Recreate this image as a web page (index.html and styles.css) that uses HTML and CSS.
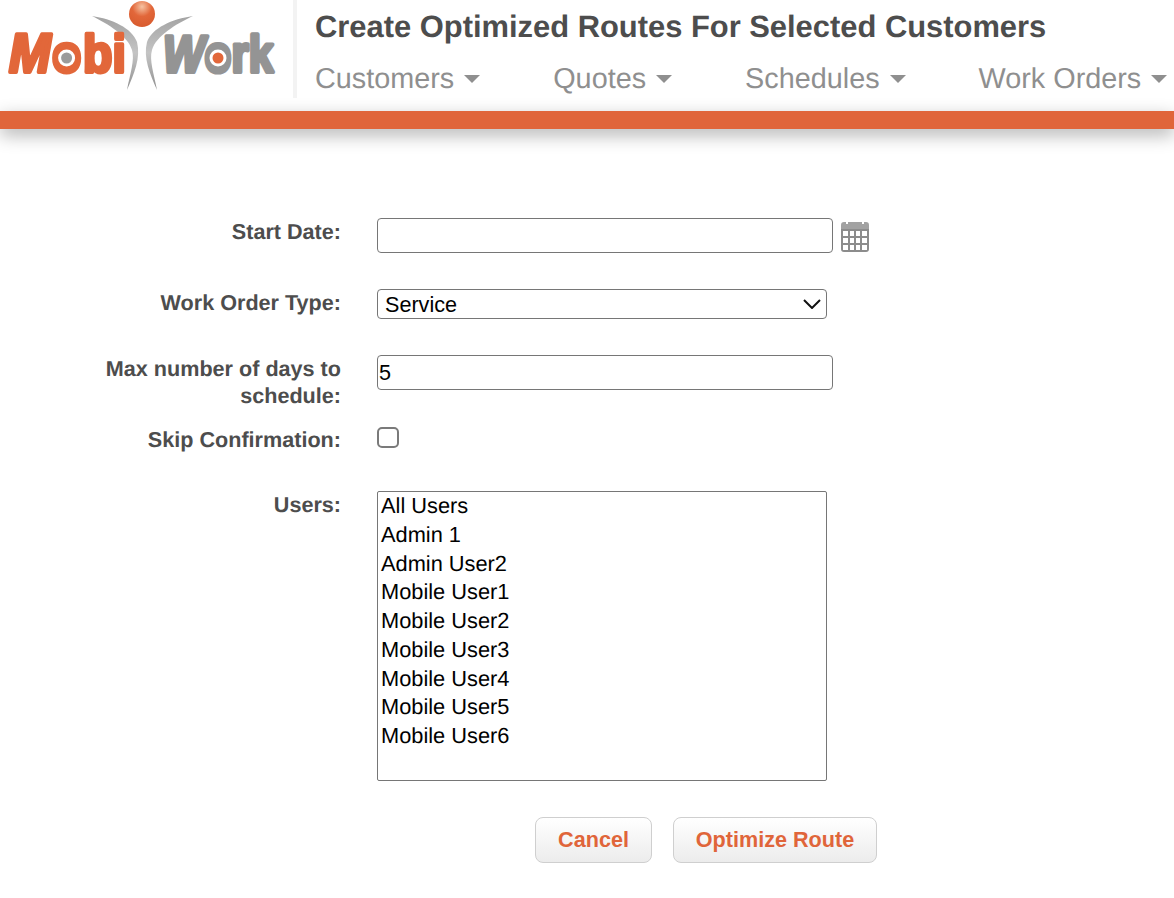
FILE: index.html
```html
<!DOCTYPE html>
<html lang="en">
<head>
  <meta charset="UTF-8" />
  <title>Create Optimized Routes</title>
  <meta name="viewport" content="width=device-width, initial-scale=1.0"/>
  <link rel="stylesheet" href="styles.css">
</head>
<body>

  <div class="header">
    <div class="logo-container">
      <svg class="logo" width="293" height="98" viewBox="0 0 293 98">
        <defs>
          <radialGradient id="ball" cx="50%" cy="22%" r="75%">
            <stop offset="0" stop-color="#f6c3a2"/>
            <stop offset="0.5" stop-color="#e2673a"/>
            <stop offset="1" stop-color="#d95c2f"/>
          </radialGradient>
          <linearGradient id="arm" x1="0" y1="0" x2="0" y2="1">
            <stop offset="0" stop-color="#a3a3a3"/>
            <stop offset="0.5" stop-color="#c4c4c4"/>
            <stop offset="1" stop-color="#8f8f8f"/>
          </linearGradient>
        </defs>
        <path d="M92 16 C112 19 132 28 137 42 C141 58 134 74 127 90 C130 74 135 60 132 50 C128 36 108 24 92 16 Z" fill="url(#arm)"/>
        <path d="M193 16 C172 19 152 28 147 42 C143 58 150 74 157 90 C154 74 149 60 152 50 C156 36 176 24 193 16 Z" fill="url(#arm)"/>
        <circle cx="142" cy="14" r="13" fill="url(#ball)"/>
        <text class="logo-text logo-mobi" transform="scale(1 1.1)" y="65"><tspan class="logo-cap" x="9">M</tspan><tspan x="52">o</tspan><tspan x="83">b</tspan><tspan x="112.4">i</tspan></text>
        <text class="logo-text logo-work" transform="scale(1 1.18)" y="60.6"><tspan class="logo-cap" x="163">W</tspan><tspan x="204.6">o</tspan><tspan x="231.6">r</tspan><tspan x="248.8">k</tspan></text>
        <circle cx="66.6" cy="58" r="8.5" fill="#fff"/>
        <circle cx="66.6" cy="58" r="5.5" fill="#9b9b9b"/>
        <circle cx="218" cy="58" r="8.5" fill="#fff"/>
        <circle cx="218" cy="58" r="5.5" fill="#e2673a"/>
      </svg>
    </div>
    <div class="title-block">
      <h1>Create Optimized Routes For Selected Customers</h1>
      <div class="nav">
        <a class="nav-customers" href="#">Customers<span class="caret"></span></a>
        <a class="nav-quotes" href="#">Quotes<span class="caret"></span></a>
        <a class="nav-schedules" href="#">Schedules<span class="caret"></span></a>
        <a href="#">Work Orders<span class="caret"></span></a>
      </div>
    </div>
  </div>
  <div class="header-bar"></div>

  <form class="form">
    <div class="form-row">
      <label>Start Date:</label>
      <input class="text-input" type="text" />
      <svg class="calendar" width="28" height="31" viewBox="0 0 28 31">
        <path d="M3 1h2v2h2V1h14v2h2V1h2a3 3 0 0 1 3 3v4H0V4a3 3 0 0 1 3-3Z" fill="#a2a2a2"/>
        <path fill-rule="evenodd" fill="#8c8c8c" d="M0 8h28v20a3 3 0 0 1-3 3H3a3 3 0 0 1-3-3V8Z M2 10v5h5v-5Z M9 10v5h4v-5Z M15 10v5h4v-5Z M21 10v5h5v-5Z M2 17v5h5v-5Z M9 17v5h4v-5Z M15 17v5h4v-5Z M21 17v5h5v-5Z M2 24v5h5v-5Z M9 24v5h4v-5Z M15 24v5h4v-5Z M21 24v5h5v-5Z"/>
      </svg>
    </div>

    <div class="form-row">
      <label>Work Order Type:</label>
      <div class="select-wrap">
        <select class="select-input">
          <option>Service</option>
        </select>
        <svg class="select-arrow" width="18" height="10" viewBox="0 0 18 10">
          <path d="M1 1l8 8 8-8" fill="none" stroke="#111" stroke-width="2"/>
        </svg>
      </div>
    </div>

    <div class="form-row form-row-tall">
      <label>Max number of days to schedule:</label>
      <input class="text-input" type="text" value="5" />
    </div>

    <div class="form-row form-row-skip">
      <label>Skip Confirmation:</label>
      <span class="checkbox"></span>
    </div>

    <div class="form-row">
      <label>Users:</label>
      <div class="user-list">
        <div>All Users</div>
        <div>Admin 1</div>
        <div>Admin User2</div>
        <div>Mobile User1</div>
        <div>Mobile User2</div>
        <div>Mobile User3</div>
        <div>Mobile User4</div>
        <div>Mobile User5</div>
        <div>Mobile User6</div>
      </div>
    </div>

    <div class="buttons">
      <button class="btn btn-cancel" type="button">Cancel</button>
      <button class="btn btn-optimize" type="button">Optimize Route</button>
    </div>
  </form>

</body>
</html>
```

FILE: styles.css
```css
body, html {
  margin: 0;
  padding: 0;
  font-family: "Liberation Sans", Arial, sans-serif;
  text-rendering: geometricPrecision;
  background: white;
  color: #000;
  overflow: hidden;
}

/* Header */
.header {
  display: flex;
  height: 111px;
  background: white;
}

.logo-container {
  width: 293px;
  height: 98px;
  flex: none;
}

.logo {
  display: block;
}

.logo-text {
  font-family: "Liberation Sans", Arial, sans-serif;
  font-weight: bold;
  stroke-width: 3.5px;
  stroke-linejoin: round;
}

.logo-cap {
  font-style: italic;
}

.logo-mobi {
  font-size: 48px;
  fill: #e2673a;
  stroke: #e2673a;
}

.logo-mobi .logo-cap {
  font-size: 50px;
}

.logo-work {
  font-size: 44px;
  fill: #949494;
  stroke: #949494;
}

.title-block {
  height: 98px;
  border-left: 4px solid #f3f3f3;
  padding-left: 18px;
  flex: 1;
  min-width: 0;
  white-space: nowrap;
}

h1 {
  margin: 0;
  padding-top: 9px;
  font-size: 30.9px;
  line-height: 36px;
  color: #4d4d4d;
}

.nav {
  display: flex;
  margin-top: 16px;
}

.nav a {
  font-size: 28.8px;
  line-height: 36px;
  color: #8f8f8f;
  text-decoration: none;
  margin-right: 73px;
}

.nav a:last-child {
  margin-right: 0;
}

.caret {
  display: inline-block;
  margin-left: 10px;
  vertical-align: 5px;
  border-left: 8px solid transparent;
  border-right: 8px solid transparent;
  border-top: 8px solid #8f8f8f;
}

.header-bar {
  height: 18px;
  background-color: #e0653a;
  box-shadow: 0 6px 18px rgba(0, 0, 0, 0.3);
}

/* Form */
.form {
  padding-top: 89px;
}

.form-row {
  display: flex;
  align-items: flex-start;
  margin-bottom: 36px;
}

.form-row-tall {
  margin-bottom: 17px;
  height: 54px;
}

.form-row-skip {
  margin-bottom: 38px;
  height: 27px;
}

label {
  width: 341px;
  margin-right: 36px;
  flex: none;
  box-sizing: border-box;
  padding-left: 90px;
  text-align: right;
  font-size: 21.6px;
  line-height: 27px;
  font-weight: bold;
  color: #4d4d4d;
}

.text-input {
  width: 456px;
  height: 35px;
  box-sizing: border-box;
  margin: 0;
  padding: 0 1px;
  border: 1px solid #767676;
  border-radius: 4px;
  font-family: inherit;
  font-size: 21.6px;
  color: #000;
  background: white;
}

.calendar {
  margin: 3px 0 0 8px;
}

.select-wrap {
  position: relative;
  width: 450px;
  height: 30px;
}

.select-input {
  appearance: none;
  display: block;
  width: 100%;
  height: 30px;
  box-sizing: border-box;
  margin: 0;
  padding: 0 7px;
  border: 1px solid #767676;
  border-radius: 4px;
  font-family: inherit;
  font-size: 21.6px;
  color: #000;
  background: white;
}

.select-arrow {
  position: absolute;
  right: 6px;
  top: 10px;
}

.checkbox {
  display: block;
  width: 22px;
  height: 21px;
  margin-top: 1px;
  box-sizing: border-box;
  border: 2px solid #7a7a7a;
  border-radius: 5px;
  background: white;
}

.user-list {
  width: 450px;
  height: 290px;
  box-sizing: border-box;
  padding: 0 3px;
  border: 1px solid #767676;
  border-radius: 2px;
  font-size: 21.8px;
  line-height: 28.75px;
  background: white;
}

.buttons {
  display: flex;
  gap: 21px;
  padding-left: 535px;
}

.btn {
  height: 46px;
  margin: 0;
  padding: 0;
  border: 1px solid #cfcfcf;
  border-radius: 8px;
  background: linear-gradient(to bottom, #ffffff, #ececec);
  color: #e0653a;
  font-family: inherit;
  font-size: 21.6px;
  font-weight: bold;
}

.btn-cancel {
  width: 117px;
}

.btn-optimize {
  width: 204px;
}
```
